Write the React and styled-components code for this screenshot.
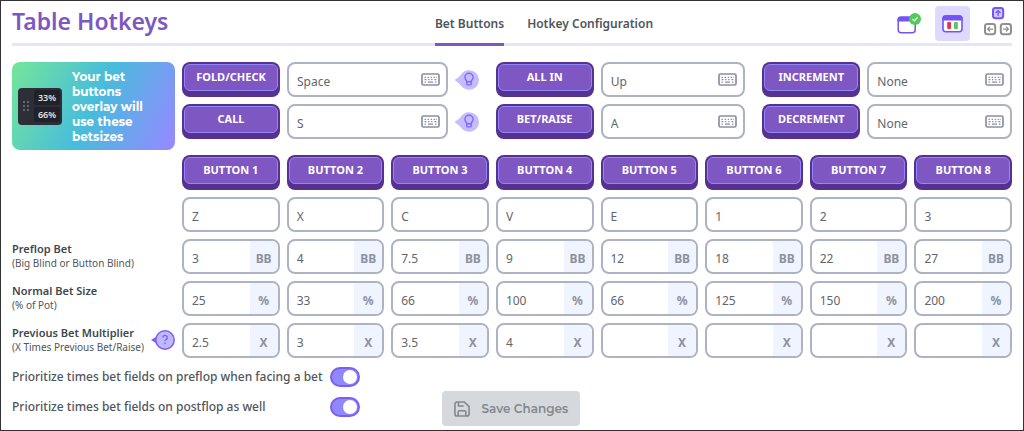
import React, { useState } from 'react';

import styled, { createGlobalStyle } from 'styled-components';

const buttonHotkeys = ['Z', 'X', 'C', 'V', 'E', '1', '2', '3'];

const betRows = [
    { title: 'Preflop Bet', hint: '(Big Blind or Button Blind)', unit: 'BB', values: ['3', '4', '7.5', '9', '12', '18', '22', '27'] },
    { title: 'Normal Bet Size', hint: '(% of Pot)', unit: '%', values: ['25', '33', '66', '100', '66', '125', '150', '200'] },
    { title: 'Previous Bet Multiplier', hint: '(X Times Previous Bet/Raise)', unit: 'X', help: true, values: ['2.5', '3', '3.5', '4', '', '', '', ''] }
];

const actionGroups = [
    { tips: true, actions: [['Fold/Check', 'Space'], ['Call', 'S']] },
    { tips: false, actions: [['All In', 'Up'], ['Bet/Raise', 'A']] },
    { tips: false, actions: [['Increment', 'None'], ['Decrement', 'None']] }
];

const KeyboardIcon = () => (
    <svg width="19" height="13" viewBox="0 0 19 13" fill="none" stroke="#8a90a0" aria-hidden="true">
        <rect x="1" y="1" width="17" height="11" rx="1.5" strokeWidth="1.7" />
        <path d="M3.5 4.3h1.4M6.6 4.3H8M9.7 4.3h1.4M12.6 4.3H14M3.5 6.7h2M7.1 6.7h1.4M10.1 6.7h1.4M13.4 6.7h2M14.8 4.3h.8M3.5 9.1h1.4M7 9.1h5M13.9 9.1h1.5" strokeWidth="1.3" />
    </svg>
);

const TipIcon = () => (
    <svg width="24" height="20" viewBox="0 0 24 20" aria-hidden="true">
        <path d="M.6 9.1C3.6 7.3 5 5.9 6.4 3.9A9.8 9.8 0 1 1 6.4 16.1C5 14.1 3.6 12.7.6 10.9Q-.4 10 .6 9.1Z" fill="#c3bcff" />
        <g fill="none" stroke="#8468fb" strokeWidth="1.4" strokeLinecap="round" strokeLinejoin="round">
            <path d="M12 11.6C11.4 10.2 9.9 9.4 9.9 7.3a4.1 4.1 0 0 1 8.2 0c0 2.1-1.5 2.9-2.1 4.3" />
            <path d="M11.8 11.7h4.4v2.2a1 1 0 0 1-1 1h-2.4a1 1 0 0 1-1-1Z" />
        </g>
    </svg>
);

const HelpIcon = () => (
    <svg width="24" height="20" viewBox="0 0 24 20" aria-hidden="true">
        <path d="M0 10 6.5 6V14Z" fill="#7c5cf6" />
        <circle cx="14" cy="10" r="9.2" fill="#bfb8ff" stroke="#7c5cf6" strokeWidth="1.5" />
        <path d="M11.8 7.6a2.2 2.2 0 1 1 3.3 1.9c-.8.5-1.1.8-1.1 1.6M14 12.5v1.4" fill="none" stroke="#7c5cf6" strokeWidth="1.4" />
    </svg>
);

const WindowCheckIcon = () => (
    <svg width="24" height="22" viewBox="0 0 24 22" aria-hidden="true">
        <rect x="1.2" y="4.2" width="17" height="15.6" rx="3" fill="#fff" stroke="#7553f5" strokeWidth="1.5" />
        <path d="M.5 8.4V6.4a3 3 0 0 1 3-3h12.4a3 3 0 0 1 3 3v2Z" fill="#7553f5" />
        <circle cx="18" cy="6" r="6" fill="#52ca5c" />
        <path d="m15.4 6.1 1.9 1.8 3.3-3.5" fill="none" stroke="#fff" strokeWidth="1.3" />
    </svg>
);

const WindowBetsIcon = () => (
    <svg width="21" height="18" viewBox="0 0 21 18" aria-hidden="true">
        <rect x="1" y="1" width="19" height="15.8" rx="3" fill="#fff" stroke="#7553f5" strokeWidth="1.6" />
        <path d="M.4 5.4V3.2a3 3 0 0 1 3-3h14.2a3 3 0 0 1 3 3v2.2Z" fill="#7553f5" />
        <rect x="5.2" y="7" width="3.8" height="7" rx="1" fill="#ec3050" />
        <rect x="12" y="7" width="3.8" height="7" rx="1" fill="#52ca5c" />
    </svg>
);

const ArrowKeysIcon = () => (
    <svg width="28" height="33" viewBox="0 0 28 33" fill="none" aria-hidden="true">
        <rect x="9" y="1" width="10.2" height="10.2" rx="2.4" fill="#cfc8ff" stroke="#7553f5" strokeWidth="2" />
        <path d="M14.1 9V3.7M11.7 6l2.4-2.4L16.5 6" stroke="#7553f5" strokeWidth="1.2" />
        <g stroke="#909090">
            <rect x="1" y="17" width="10.2" height="10.2" rx="2.4" strokeWidth="2" />
            <rect x="16.8" y="17" width="10.2" height="10.2" rx="2.4" strokeWidth="2" />
            <path d="M9 22.1H3.8M6 19.7l-2.4 2.4L6 24.5M19 22.1h5.2M22 19.7l2.4 2.4-2.4 2.4" strokeWidth="1.2" />
        </g>
    </svg>
);

const SaveIcon = () => (
    <svg width="16" height="16" viewBox="0 0 17 17" fill="none" stroke="#85888c" strokeWidth="1.7" strokeLinejoin="round" aria-hidden="true">
        <path d="M1 3.2A2.2 2.2 0 0 1 3.2 1H11l5 5v7.8a2.2 2.2 0 0 1-2.2 2.2H3.2A2.2 2.2 0 0 1 1 13.8Z" />
        <path d="M4.7 1v4.3h5.6M4.4 16v-4.2c0-.8.6-1.4 1.4-1.4h5.4c.8 0 1.4.6 1.4 1.4V16" />
    </svg>
);

const KeyButton = ({ children }) => (
    <KeyBase>
        <KeyFace>{children}</KeyFace>
    </KeyBase>
);

const App = () => {

    const [tab, setTab] = useState('Bet Buttons');

    return (
        <>
            <GlobalStyle />
            <Page>
                <Header>
                    <Title>Table Hotkeys</Title>
                    <Tabs>
                        {['Bet Buttons', 'Hotkey Configuration'].map(name => (
                            <Tab key={name} $active={tab === name} onClick={() => setTab(name)}>{name}</Tab>
                        ))}
                    </Tabs>
                    <Tools>
                        <Tool aria-label="Window enabled"><WindowCheckIcon /></Tool>
                        <Tool aria-label="Bet window" $active><WindowBetsIcon /></Tool>
                        <Tool aria-label="Arrow keys"><ArrowKeysIcon /></Tool>
                    </Tools>
                </Header>
                <TopSection>
                    <Banner>
                        <Overlay>
                            <Grip>{[...Array(6)].map((_, i) => <i key={i} />)}</Grip>
                            <Sizes>
                                <span>33%</span>
                                <span>66%</span>
                            </Sizes>
                        </Overlay>
                        <p>Your bet buttons overlay will use these betsizes</p>
                    </Banner>
                    <Actions>
                        {actionGroups.map((group, i) => (
                            <ActionGroup key={i}>
                                {group.actions.map(([name, hotkey]) => (
                                    <Action key={name}>
                                        <KeyButton>{name}</KeyButton>
                                        <Field>
                                            <input aria-label={name + ' hotkey'} defaultValue={hotkey} />
                                            <KeyboardIcon />
                                        </Field>
                                        {group.tips && <TipIcon />}
                                    </Action>
                                ))}
                            </ActionGroup>
                        ))}
                    </Actions>
                </TopSection>
                <BetGrid>
                    <span />
                    {buttonHotkeys.map((_, i) => <KeyButton key={i}>Button {i + 1}</KeyButton>)}
                    <span />
                    {buttonHotkeys.map((hotkey, i) => (
                        <Field key={i}>
                            <input aria-label={`Button ${i + 1} hotkey`} defaultValue={hotkey} />
                        </Field>
                    ))}
                    {betRows.map(row => (
                        <React.Fragment key={row.title}>
                            <RowLabel>
                                <div>
                                    <strong>{row.title}</strong>
                                    <small>{row.hint}</small>
                                </div>
                                {row.help && <HelpIcon />}
                            </RowLabel>
                            {row.values.map((value, i) => (
                                <Field key={i}>
                                    <input aria-label={`${row.title} ${i + 1}`} defaultValue={value} />
                                    <Unit>{row.unit}</Unit>
                                </Field>
                            ))}
                        </React.Fragment>
                    ))}
                </BetGrid>
                <Footer>
                    <Switches>
                        <label htmlFor="preflop">Prioritize times bet fields on preflop when facing a bet</label>
                        <Switch id="preflop" type="checkbox" defaultChecked />
                        <label htmlFor="postflop">Prioritize times bet fields on postflop as well</label>
                        <Switch id="postflop" type="checkbox" defaultChecked />
                    </Switches>
                    <SaveButton disabled>
                        <SaveIcon />
                        Save Changes
                    </SaveButton>
                </Footer>
            </Page>
        </>
    );
};

const GlobalStyle = createGlobalStyle`
    * {
        box-sizing: border-box;
        margin: 0;
    }

    body {
        background-color: #fff;
        color: #50555c;
        font-family: "Segoe UI", "Noto Sans", sans-serif;
        font-size: 12px;
    }

    button, input {
        font: inherit;
        color: inherit;
    }

    button {
        border: none;
        background: none;
        padding: 0;
        cursor: pointer;
    }
`;

const Page = styled.main`
    min-height: 100vh;
    border: 1px solid #333;
    padding: 0 11px 4px;
`;

const Header = styled.header`
    display: grid;
    grid-template-columns: 1fr auto 1fr;
    height: 45px;
    border-bottom: 3px solid #e2e7f5;
`;

const Title = styled.h1`
    font-size: 23px;
    line-height: 40px;
    font-weight: 600;
    color: #7e57c2;
`;

const Tabs = styled.nav`
    display: flex;
    gap: 23px;
    margin-bottom: -3px;
    padding-left: 64px;
`;

const Tab = styled.button`
    font-weight: 600;
    white-space: nowrap;
    border-top: 3px solid transparent;
    border-bottom: 3px solid ${({ $active }) => $active ? '#7e57c2' : 'transparent'};
`;

const Tools = styled.div`
    display: flex;
    justify-content: flex-end;
    align-items: flex-end;
    gap: 14px;
    padding-bottom: 2px;
`;

const Tool = styled.button`
    display: flex;
    justify-content: center;
    align-items: center;
    width: ${({ $active }) => $active ? '35px' : 'auto'};
    height: 35px;
    border-radius: 4px;
    background-color: ${({ $active }) => $active ? '#dedaff' : 'transparent'};
`;

const TopSection = styled.section`
    display: flex;
    gap: 7px;
    margin-top: 16px;
`;

const Banner = styled.div`
    display: flex;
    align-items: center;
    gap: 10px;
    flex: none;
    width: 163px;
    height: 88px;
    padding: 0 24px 0 6px;
    border-radius: 8px;
    background: linear-gradient(115deg, #74e69a, #47bcdc 50%, #918cff 95%);
    color: #fff;
    font-family: Montserrat, Inter, sans-serif;
    font-weight: 700;
    line-height: 15px;
`;

const Overlay = styled.div`
    display: flex;
    align-items: center;
    justify-content: space-between;
    flex: none;
    width: 44px;
    height: 37px;
    padding: 0 2px 0 5px;
    border-radius: 4px;
    background-color: #2d2e38;
`;

const Grip = styled.div`
    display: grid;
    grid-template-columns: 2px 2px;
    gap: 2px;

    i {
        height: 2px;
        border-radius: 1px;
        background-color: #777881;
    }
`;

const Sizes = styled.div`
    display: grid;
    gap: 2px;
    color: #e2e2e4;
    font: 600 9px/15px "Noto Sans", sans-serif;

    span {
        width: 26px;
        text-align: center;
        border-radius: 2px;
        background-color: #202129;
    }
`;

const Actions = styled.div`
    display: grid;
    grid-template-columns: 297fr 250fr 250fr;
    gap: 17px;
    flex: 1;
    align-items: start;
`;

const ActionGroup = styled.div`
    display: grid;
    gap: 7px;
`;

const Action = styled.div`
    display: flex;
    align-items: center;
    gap: 7px;

    > button {
        flex: none;
        width: 98px;
    }
`;

const KeyBase = styled.button`
    display: flex;
    height: 35px;
    padding: 2px 2px 6px;
    border-radius: 8px;
    background-color: #57318f;
`;

const KeyFace = styled.span`
    display: flex;
    justify-content: center;
    align-items: center;
    flex: 1;
    padding-bottom: 2px;
    border: 1px solid #9088fa;
    border-radius: 6px;
    background-color: #7e57c2;
    color: #fff;
    font-size: 11px;
    font-weight: 700;
    text-transform: uppercase;
    white-space: nowrap;
`;

const Field = styled.div`
    display: flex;
    align-items: center;
    flex: 1;
    min-width: 0;
    height: 35px;
    border: 2px solid #adb3c2;
    border-radius: 8px;
    overflow: hidden;

    input {
        flex: 1;
        width: 0;
        min-width: 0;
        height: 100%;
        border: none;
        outline: none;
        background: none;
        padding: 3px 0 0 8px;
        color: #62666c;
    }

    svg {
        flex: none;
        margin-right: 6px;
    }
`;

const Unit = styled.span`
    display: flex;
    justify-content: center;
    align-items: center;
    width: 28px;
    height: 100%;
    padding-top: 3px;
    background-color: #f0f4ff;
    color: #8d929e;
    font-weight: 700;
`;

const BetGrid = styled.section`
    display: grid;
    grid-template-columns: 163px repeat(8, minmax(0, 1fr));
    gap: 7px;
    margin-top: 5px;
`;

const RowLabel = styled.div`
    display: flex;
    align-items: center;
    justify-content: space-between;
    padding-bottom: 2px;
    white-space: nowrap;
    line-height: 15px;

    strong, small {
        display: block;
    }

    strong {
        color: #41464d;
        font-size: 11px;
        font-weight: 600;
    }

    small {
        font-size: 10px;
    }

    svg {
        flex: none;
    }
`;

const Footer = styled.footer`
    display: flex;
    align-items: flex-end;
    gap: 82px;
    margin-top: 4px;
`;

const Switches = styled.div`
    display: grid;
    grid-template-columns: auto auto;
    column-gap: 7px;
    align-items: center;
    padding-bottom: 4px;
    font-weight: 500;
    line-height: 30px;
`;

const Switch = styled.input`
    appearance: none;
    display: flex;
    justify-content: flex-end;
    align-items: center;
    width: 30px;
    height: 20px;
    padding: 1px;
    border: 2px solid #7c5cf6;
    border-radius: 10px;
    background-color: #9088ff;
    cursor: pointer;

    &::before {
        content: "";
        width: 14px;
        height: 14px;
        border-radius: 50%;
        background-color: #fff;
    }

    &:not(:checked) {
        justify-content: flex-start;
        background-color: #c9ccd3;
    }
`;

const SaveButton = styled.button`
    display: flex;
    align-items: center;
    gap: 12px;
    height: 35px;
    padding: 0 12px;
    border-radius: 4px;
    background-color: #d5d8dd;
    color: #85888c;
    font-family: Montserrat, Inter, sans-serif;
    font-weight: 600;
`;

export default App;
